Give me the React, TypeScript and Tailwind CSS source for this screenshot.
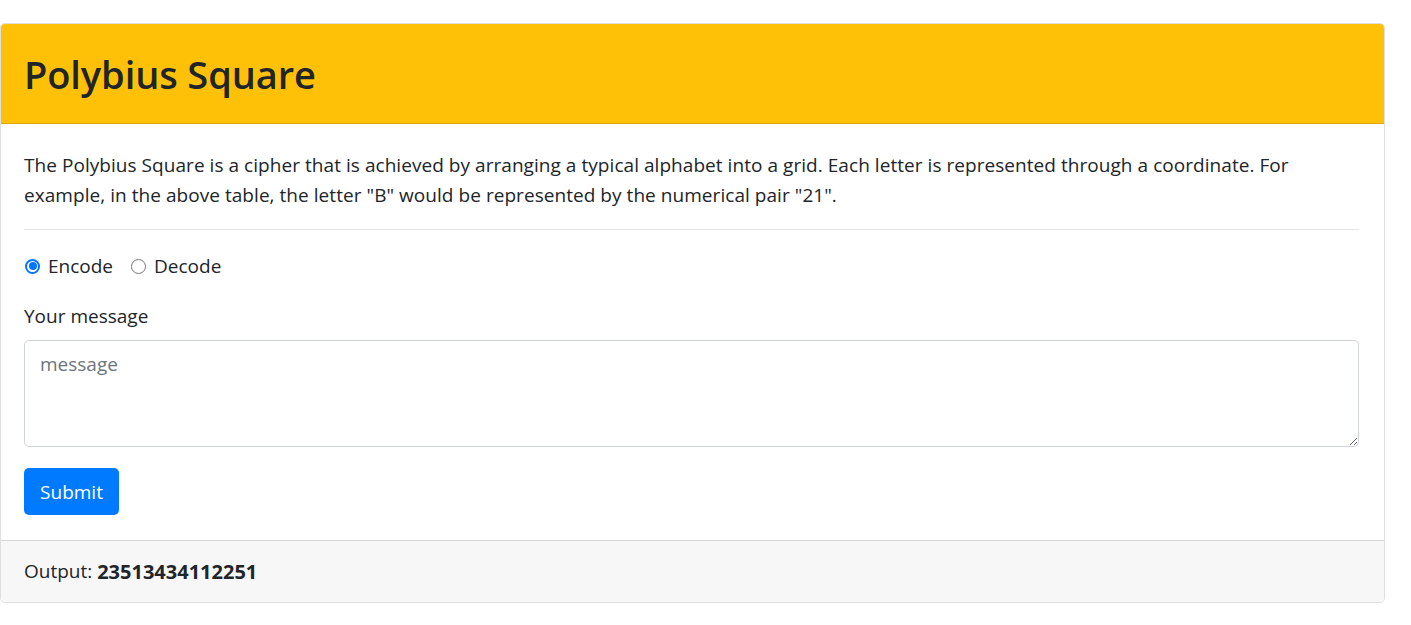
import React from "react";

export default function App() {
  const font = { fontFamily: '"Open Sans", "Noto Sans", sans-serif' };
  return (
    <div className="bg-white min-h-[625px] pt-[23px] text-[#212529]" style={font}>
      <div className="w-[1385px] border border-[rgba(0,0,0,0.125)] rounded-[5px] overflow-hidden">
        <div className="bg-[#ffc107] border-b border-[rgba(0,0,0,0.125)] h-[100px] pl-[23px] pr-[25px] flex items-center">
          <h2 className="text-[38px] leading-[48px] font-semibold tracking-[-0.1px]">Polybius Square</h2>
        </div>
        <div className="pl-[23px] pr-[25px] pt-[26px] pb-[25px] text-[19px] leading-[30px]">
          <p className="mb-[19px] tracking-[0.05px]">
            The Polybius Square is a cipher that is achieved by arranging a typical alphabet into a grid. Each letter is represented through a coordinate. For
            <br />
            example, in the above table, the letter "B" would be represented by the numerical pair "21".
          </p>
          <hr className="border-t border-[rgba(0,0,0,0.1)] mb-[21px]" />
          <div className="flex items-center h-[30px] mb-[20px]">
            <label className="flex items-center mr-[18px]">
              <span className="w-[15px] h-[15px] rounded-full bg-[#0075ff] flex items-center justify-center mr-[8px] ml-[1px]">
                <span className="w-[11px] h-[11px] rounded-full bg-white flex items-center justify-center">
                  <span className="w-[8px] h-[8px] rounded-full bg-[#0075ff]" />
                </span>
              </span>
              Encode
            </label>
            <label className="flex items-center">
              <span className="w-[15px] h-[15px] rounded-full border border-[#767676] mr-[8px]" />
              Decode
            </label>
          </div>
          <div className="mb-[9px] h-[30px]">Your message</div>
          <textarea
            placeholder="message"
            className="block w-full h-[107px] border border-[#ced4da] rounded-[5px] px-[15px] py-[8px] placeholder-[#6c757d] outline-none mb-[21px]"
          />
          <button className="bg-[#007bff] text-white rounded-[5px] h-[47px] w-[95px] text-[19px]">Submit</button>
        </div>
        <div className="bg-[#f7f7f7] border-t border-[rgba(0,0,0,0.125)] h-[62px] pl-[23px] pr-[25px] flex items-center text-[19px]">
          <span>Output:&nbsp;</span>
          <b className="font-bold text-[20px]">23513434112251</b>
        </div>
      </div>
    </div>
  );
}
